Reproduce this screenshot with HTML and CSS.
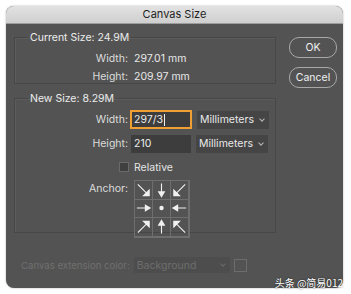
FILE: index.html
```html
<!DOCTYPE html>
<html lang="en">
<head>
    <meta charset="UTF-8">
    <title>Canvas Size</title>
    <link rel="stylesheet" href="styles.css">
</head>
<body>

<div class="dialog">
    <!-- Title Bar -->
    <div class="title-bar">Canvas Size</div>

    <div class="dialog-body">
        <div class="main-col">
            <!-- Current Size -->
            <fieldset class="group group-current">
                <legend>Current Size: 24.9M</legend>
                <div class="row">
                    <span class="label">Width:</span>
                    <span class="value">297.01 mm</span>
                </div>
                <div class="row">
                    <span class="label">Height:</span>
                    <span class="value">209.97 mm</span>
                </div>
            </fieldset>

            <!-- New Size -->
            <fieldset class="group group-new">
                <legend>New Size: 8.29M</legend>
                <div class="row row-input">
                    <span class="label">Width:</span>
                    <div class="text-input focused">297/3<span class="caret"></span></div>
                    <div class="select">Millimeters<span class="chevron"></span></div>
                </div>
                <div class="row row-input">
                    <span class="label">Height:</span>
                    <div class="text-input">210</div>
                    <div class="select">Millimeters<span class="chevron"></span></div>
                </div>
                <div class="row row-check">
                    <span class="checkbox"></span>
                    <span class="check-label">Relative</span>
                </div>
                <div class="row row-anchor">
                    <span class="label">Anchor:</span>
                    <div class="anchor-grid">
                        <div class="cell"><svg viewBox="0 0 18 18"><path d="M3 3 L12 12 M15 9 L15 15 L9 15 Z"/></svg></div>
                        <div class="cell"><svg viewBox="0 0 18 18"><path d="M9 2 L9 12 M6 11 L12 11 L9 16 Z"/></svg></div>
                        <div class="cell"><svg viewBox="0 0 18 18"><path d="M15 3 L6 12 M3 9 L3 15 L9 15 Z"/></svg></div>
                        <div class="cell"><svg viewBox="0 0 18 18"><path d="M2 9 L12 9 M11 6 L11 12 L16 9 Z"/></svg></div>
                        <div class="cell"><svg viewBox="0 0 18 18"><circle cx="9" cy="9" r="2.3"/></svg></div>
                        <div class="cell"><svg viewBox="0 0 18 18"><path d="M16 9 L6 9 M7 6 L7 12 L2 9 Z"/></svg></div>
                        <div class="cell"><svg viewBox="0 0 18 18"><path d="M3 15 L12 6 M9 3 L15 3 L15 9 Z"/></svg></div>
                        <div class="cell"><svg viewBox="0 0 18 18"><path d="M9 16 L9 6 M6 7 L12 7 L9 2 Z"/></svg></div>
                        <div class="cell"><svg viewBox="0 0 18 18"><path d="M15 15 L6 6 M3 9 L3 3 L9 3 Z"/></svg></div>
                    </div>
                </div>
            </fieldset>

            <!-- Extension color -->
            <div class="ext-row">
                <span class="ext-label">Canvas extension color:</span>
                <div class="select select-disabled">Background<span class="chevron"></span></div>
                <span class="swatch"></span>
            </div>
        </div>

        <!-- Buttons -->
        <div class="button-col">
            <div class="btn">OK</div>
            <div class="btn">Cancel</div>
        </div>
    </div>
</div>

<div class="watermark">头条 @简易012</div>

</body>
</html>
```

FILE: styles.css
```css
body {
    margin: 0;
    padding: 6px;
    background: #fff;
    font-family: Inter, "Liberation Sans", Arial, sans-serif;
    font-size: 10.5px;
    color: #e4e4e4;
}

/* Dialog window */
.dialog {
    width: 337px;
    height: 282px;
    background: #535353;
    border-radius: 8px;
    overflow: hidden;
    box-shadow: 0 0 2px rgba(0, 0, 0, 0.35);
}

.title-bar {
    height: 17px;
    line-height: 17px;
    text-align: center;
    font-size: 11px;
    color: #1e1e1e;
    background: linear-gradient(#e2e2e2, #cfcfcf);
    border-bottom: 1px solid #9c9c9c;
}

.dialog-body {
    display: flex;
    padding: 7px 0 0 8px;
}

.main-col {
    width: 262px;
}

/* Group boxes */
.group {
    margin: 0;
    padding: 0;
    border: 1px solid #474747;
    box-shadow: inset 1px 1px 0 #5c5c5c;
}

.group legend {
    padding: 0 2px;
    margin-left: 13px;
    color: #ececec;
}

.group-current {
    height: 46px;
    padding-top: 5px;
}

.group-new {
    height: 134px;
    margin-top: 8px;
    padding-top: 5px;
}

.row {
    display: flex;
    align-items: center;
    height: 18px;
}

.label {
    width: 113px;
    text-align: right;
    color: #dcdcdc;
}

.value {
    margin-left: 6px;
    color: #e8e8e8;
}

.row-input {
    height: 19px;
    margin-bottom: 5px;
}

.text-input {
    display: flex;
    align-items: center;
    box-sizing: border-box;
    width: 60px;
    height: 18px;
    margin-left: 3px;
    padding-left: 3px;
    background: #3d3d3d;
    color: #ececec;
}

.text-input.focused {
    width: 62px;
    height: 19px;
    margin-left: 2px;
    border: 2px solid #f0a032;
    padding-left: 2px;
}

.caret {
    width: 1px;
    height: 12px;
    margin-left: 1px;
    background: #f0f0f0;
}

.select {
    display: flex;
    align-items: center;
    justify-content: space-between;
    box-sizing: border-box;
    width: 72px;
    height: 18px;
    margin-left: 5px;
    padding: 0 5px 0 3px;
    background: #454545;
    color: #e8e8e8;
}

.chevron {
    width: 3px;
    height: 3px;
    margin-top: -2px;
    border-right: 1px solid #b8b8b8;
    border-bottom: 1px solid #b8b8b8;
    transform: rotate(45deg);
}

.row-check {
    margin-top: 2px;
    padding-left: 104px;
}

.checkbox {
    width: 8px;
    height: 8px;
    background: #3f3f3f;
    border: 1px solid #6a6a6a;
}

.check-label {
    margin-left: 5px;
    color: #e4e4e4;
}

.row-anchor {
    align-items: flex-start;
    height: auto;
    margin-top: 4px;
}

.row-anchor .label {
    margin-top: 2px;
}

.anchor-grid {
    display: grid;
    grid-template-columns: repeat(3, 18px);
    grid-template-rows: repeat(3, 18.5px);
    margin-left: 6px;
    border: 1px solid #6e6e6e;
}

.cell {
    display: flex;
    align-items: center;
    border: 1px solid #6e6e6e;
    margin: -1px 0 0 -1px;
}

.cell svg {
    display: block;
    width: 18px;
    height: 18px;
}

.cell path {
    stroke: #f0f0f0;
    stroke-width: 1.2;
    fill: #f0f0f0;
}

.cell circle {
    fill: #f0f0f0;
}

/* Extension color row */
.ext-row {
    display: flex;
    align-items: center;
    margin-top: 24px;
    padding-left: 7px;
}

.ext-label {
    font-size: 9.6px;
    color: #707070;
}

.select-disabled {
    width: 96px;
    height: 16px;
    margin-left: 4px;
    background: #4d4d4d;
    color: #6e6e6e;
}

.select-disabled .chevron {
    border-color: #6a6a6a;
}

.swatch {
    width: 11px;
    height: 11px;
    margin-left: 4px;
    border: 1px solid #6c6c6c;
}

/* Buttons */
.button-col {
    display: flex;
    flex-direction: column;
    gap: 9px;
    margin-left: 13px;
    padding-top: 6px;
}

.btn {
    width: 46px;
    height: 19px;
    line-height: 19px;
    text-align: center;
    border: 1px solid #a8a8a8;
    border-radius: 10px;
    color: #f0f0f0;
}

/* Watermark overlay */
.watermark {
    position: absolute;
    right: 8px;
    top: 275px;
    font-family: "Noto Sans CJK SC", sans-serif;
    font-size: 10px;
    color: #fff;
    text-shadow: 0 0 2px rgba(0, 0, 0, 0.7);
}
```
